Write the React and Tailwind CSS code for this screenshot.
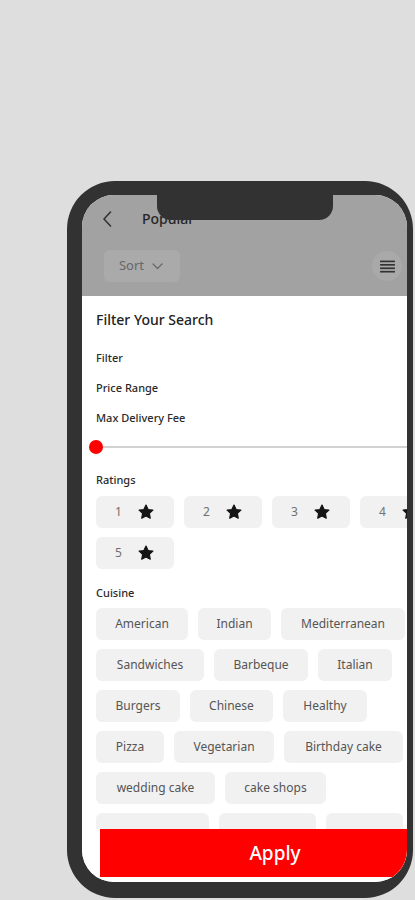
import React from "react";

const cuisines = [
  ["American", "w-[92px]"],
  ["Indian", "w-[73px]"],
  ["Mediterranean", "w-[124px]"],
  ["Sandwiches", "w-[108px]"],
  ["Barbeque", "w-[94px]"],
  ["Italian", "w-[74px]"],
  ["Burgers", "w-[84px]"],
  ["Chinese", "w-[83px]"],
  ["Healthy", "w-[84px]"],
  ["Pizza", "w-[68px]"],
  ["Vegetarian", "w-[100px]"],
  ["Birthday cake", "w-[119px]"],
  ["wedding cake", "w-[119px]"],
  ["cake shops", "w-[101px]"],
  ["", "w-[113px]"],
  ["", "w-[97px]"],
  ["", "w-[77px]"],
];

function Star() {
  return (
    <svg width="18" height="18" viewBox="0 0 24 24">
      <path
        d="M12 2.8l2.8 5.9 6.4.8-4.7 4.4 1.2 6.4L12 17.2l-5.7 3.1 1.2-6.4-4.7-4.4 6.4-.8z"
        fill="#151515"
        stroke="#151515"
        strokeWidth="1.6"
        strokeLinejoin="round"
      />
    </svg>
  );
}

export default function App() {
  return (
    <div
      className="w-[415px] h-[900px] bg-[#dedede] overflow-hidden pt-[181px] pl-[67px]"
      style={{ fontFamily: '"Noto Sans", "Liberation Sans", sans-serif' }}
    >
      <div className="relative w-[346px] h-[717px] rounded-[48px] bg-[#323232] border-l-[15px] border-t-[14px] border-r-[6px] border-b-[16px] border-[#323232]">
        <div className="relative w-full h-full rounded-[32px] overflow-hidden bg-white flex flex-col">
          {/* header (dimmed) */}
          <div className="h-[101px] shrink-0 bg-[#a2a2a2] flex flex-col pl-[20px] pr-[5px]">
            <div className="mt-[16px] h-[16px] flex items-center">
              <svg width="10" height="16" viewBox="0 0 10 16">
                <polyline points="8.5,1 2,8 8.5,15" fill="none" stroke="#333" strokeWidth="1.6" strokeLinecap="round" strokeLinejoin="round" />
              </svg>
              <span className="ml-[30px] text-[14px] leading-[16px] font-medium text-[#262626]">Popular</span>
            </div>
            <div className="mt-[23px] flex items-center justify-between">
              <div className="ml-[2px] w-[76px] h-[32px] rounded-md bg-[#aaaaaa] flex items-center justify-center gap-[8px] pr-[2px]">
                <span className="text-[13px] text-[#676767]">Sort</span>
                <svg width="11" height="7" viewBox="0 0 11 7">
                  <polyline points="1,1 5.5,5.5 10,1" fill="none" stroke="#6a6a6a" strokeWidth="1.3" strokeLinecap="round" strokeLinejoin="round" />
                </svg>
              </div>
              <div className="w-[30px] h-[30px] rounded-full bg-[#a9a9a9] flex items-center justify-center">
                <svg width="15" height="13" viewBox="0 0 16 14">
                  <g stroke="#333" strokeWidth="1.8">
                    <line x1="0" y1="1.5" x2="16" y2="1.5" />
                    <line x1="0" y1="5.2" x2="16" y2="5.2" />
                    <line x1="0" y1="8.9" x2="16" y2="8.9" />
                    <line x1="0" y1="12.6" x2="16" y2="12.6" />
                  </g>
                </svg>
              </div>
            </div>
          </div>

          {/* sheet */}
          <div className="flex-1 min-h-0 flex flex-col bg-white">
            <div className="flex-1 min-h-0 overflow-hidden pl-[14px]">
              <div className="w-[345px] pt-[14px]">
                <div className="text-[14px] leading-[20px] font-medium text-[#222]">Filter Your Search</div>
                <div className="mt-[20px] text-[11px] leading-[16px] font-medium text-[#2a2a2a]">Filter</div>
                <div className="mt-[14px] text-[11px] leading-[16px] font-medium text-[#2a2a2a]">Price Range</div>
                <div className="mt-[14px] text-[11px] leading-[16px] font-medium text-[#2a2a2a]">Max Delivery Fee</div>
                <div className="mt-[14px] h-[14px] relative flex items-center">
                  <div className="w-full h-[2px] bg-[#d2d2d2]" />
                  <div className="absolute left-[-7px] top-0 w-[14px] h-[14px] rounded-full bg-[#ff0000]" />
                </div>
                <div className="mt-[18px] text-[11px] leading-[16px] font-medium text-[#2a2a2a]">Ratings</div>
                <div className="mt-[8px] flex flex-wrap gap-x-[10px] gap-y-[9px]">
                  {[1, 2, 3, 4, 5].map((n) => (
                    <div key={n} className="w-[78px] h-[32px] rounded-md bg-[#f1f1f1] flex items-center justify-center gap-[15px]">
                      <span className="text-[12px] text-[#707070]">{n}</span>
                      <Star />
                    </div>
                  ))}
                </div>
                <div className="mt-[16px] text-[11px] leading-[16px] font-medium text-[#2a2a2a]">Cuisine</div>
                <div className="mt-[7px] flex flex-wrap gap-x-[10px] gap-y-[9px]">
                  {cuisines.map(([label, w], i) => (
                    <div key={i} className={`${w} h-[32px] rounded-md bg-[#f1f1f1] flex items-center justify-center text-[12px] text-[#555]`}>
                      {label}
                    </div>
                  ))}
                </div>
              </div>
            </div>
            <div className="shrink-0 pl-[18px] pb-[5px] overflow-hidden">
              <div className="w-[350px] h-[48px] bg-[#ff0000] flex items-center justify-center text-white text-[19px] font-medium">
                Apply
              </div>
            </div>
          </div>

          {/* notch */}
          <div className="absolute top-0 left-[75px] w-[176px] h-[25px] bg-[#323232] rounded-b-[14px]" />
        </div>
      </div>
    </div>
  );
}
